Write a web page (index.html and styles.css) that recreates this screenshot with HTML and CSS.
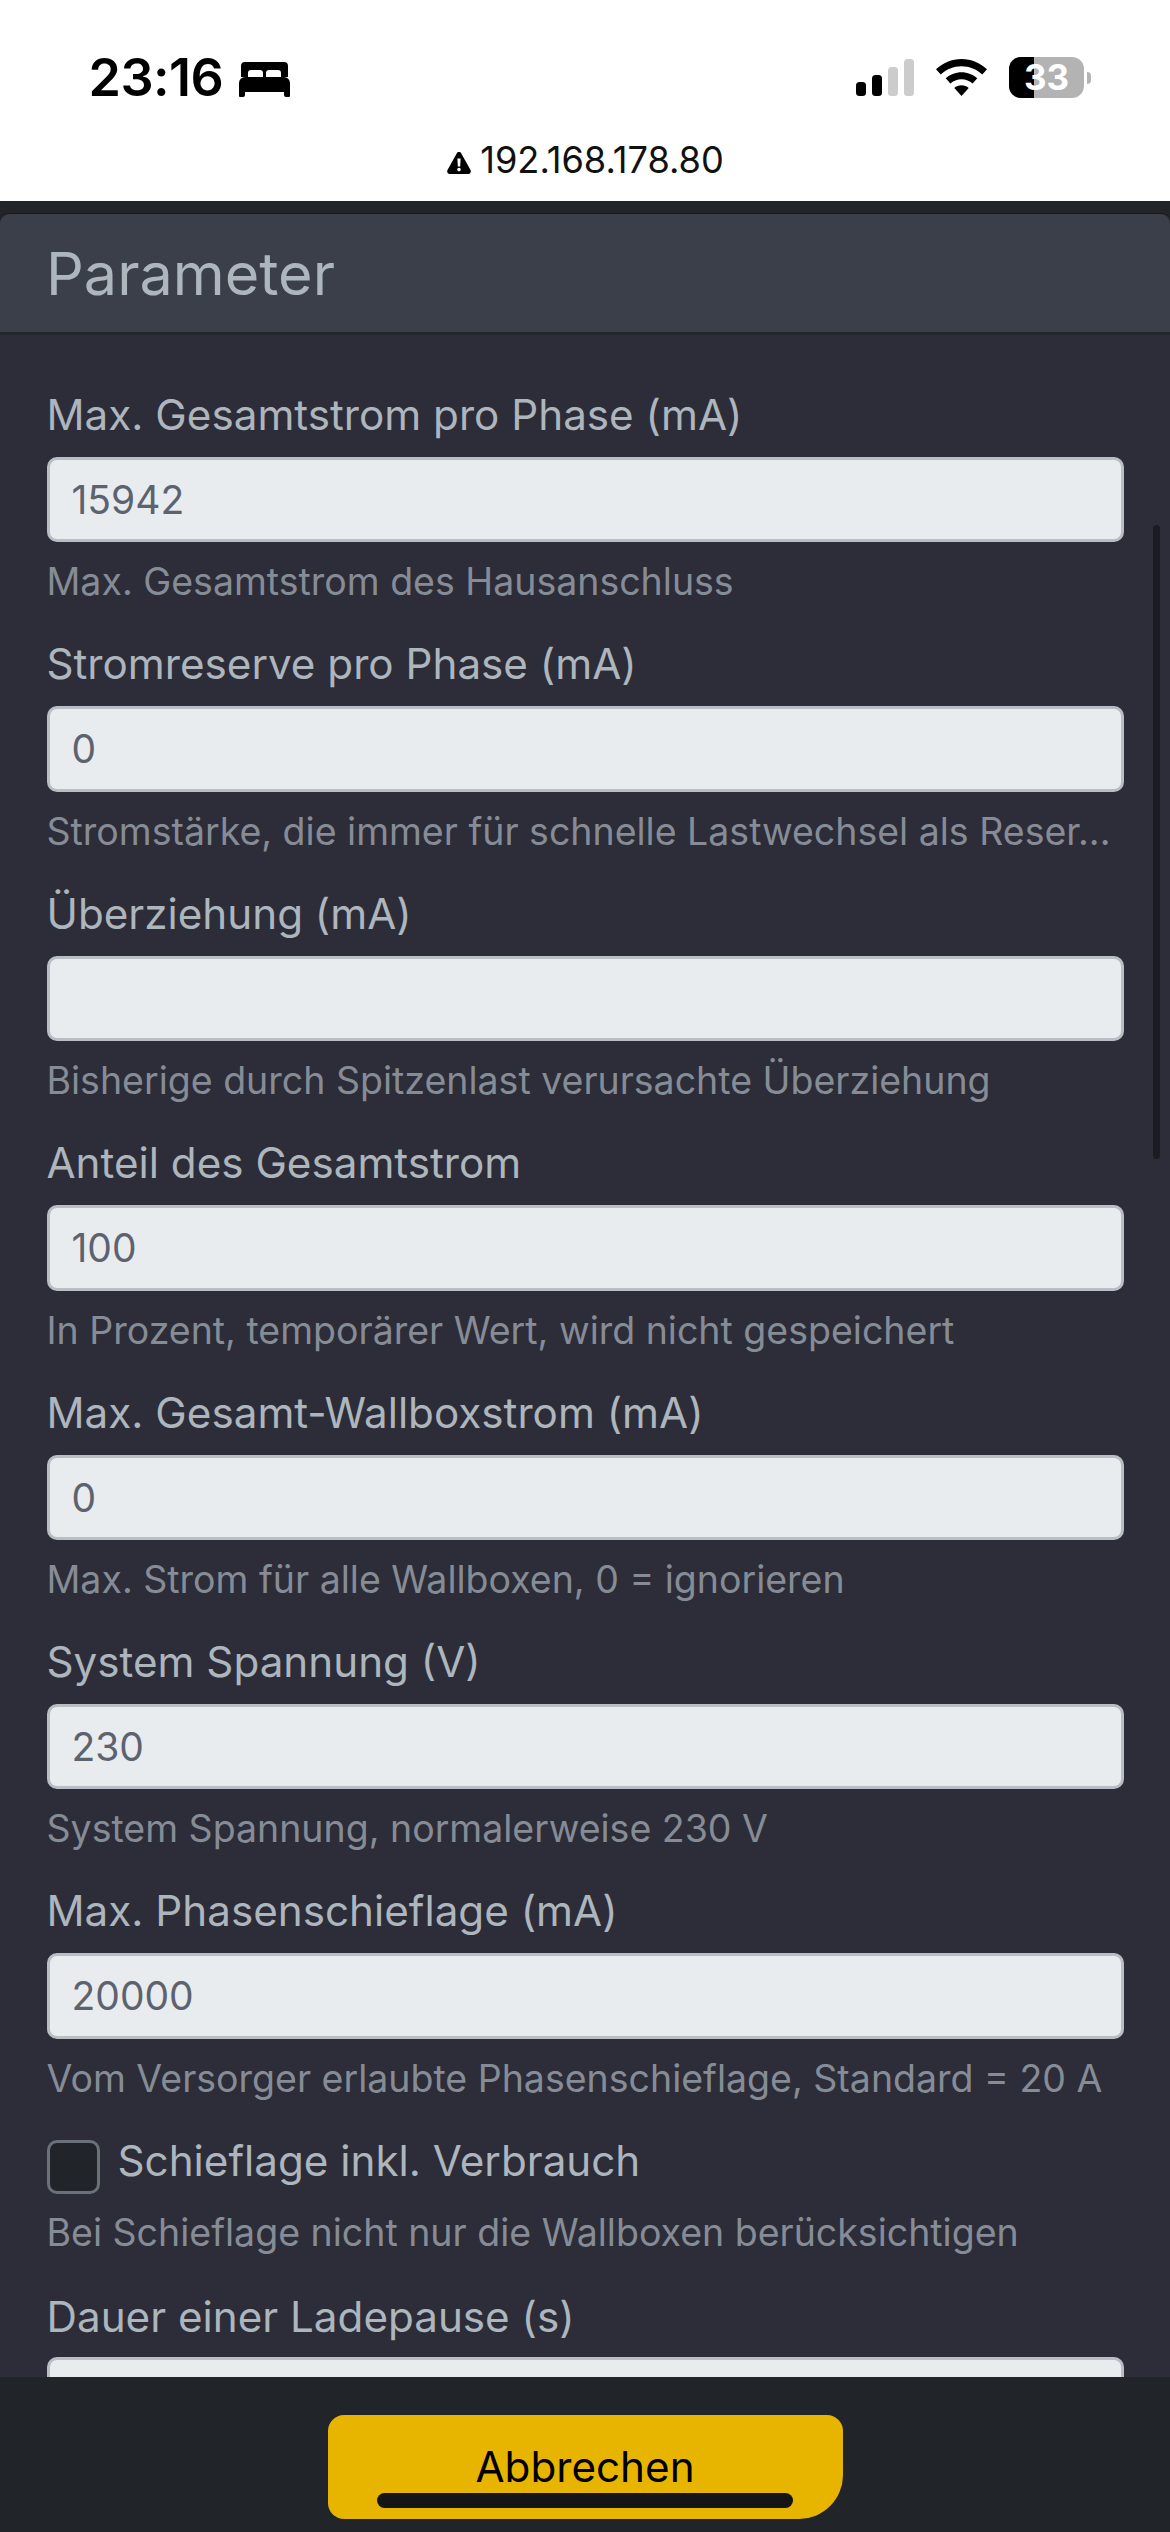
FILE: index.html
```html
<!DOCTYPE html>
<html lang="de">
<head>
<meta charset="utf-8">
<title>Parameter</title>
<link rel="stylesheet" href="styles.css">
</head>
<body>
<div class="phone">
  <header class="browser">
    <div class="status">
      <div class="status-left">
        <span class="time">23:16</span>
        <svg class="bed" viewBox="0 0 51 35"><path d="M6 0h39a4 4 0 0 1 4 4v11h-7v-4a3 3 0 0 0-3-3h-9a3 3 0 0 0-3 3v4h-3v-4a3 3 0 0 0-3-3h-9a3 3 0 0 0-3 3v4H2V4a4 4 0 0 1 4-4z"/><path d="M6 15h39a6 6 0 0 1 6 6v13a1 1 0 0 1-1 1h-3a2 2 0 0 1-2-2v-3H6v3a2 2 0 0 1-2 2H1a1 1 0 0 1-1-1V21a6 6 0 0 1 6-6z"/></svg>
      </div>
      <div class="status-right">
        <svg class="signal" viewBox="0 0 58 37"><rect x="0" y="23" width="10" height="14" rx="3.5"/><rect x="16" y="16" width="10" height="21" rx="3.5"/><rect class="off" x="32" y="8" width="10" height="29" rx="3.5"/><rect class="off" x="48" y="0" width="10" height="37" rx="3.5"/></svg>
        <svg class="wifi" viewBox="0 0 51 37"><path d="M25.5 0C35.3 0 44 3.900 51 10.200l-4.700 5.200C40.600 10.300 33.400 7.200 25.500 7.200S10.400 10.300 4.700 15.400L0 10.200C7 3.900 15.700 0 25.500 0z"/><path d="M25.500 13.200c6 0 11.600 2.300 15.800 6.100l-4.700 5.200c-2.900-2.600-6.800-4.200-11.100-4.200s-8.200 1.600-11.100 4.200l-4.700-5.200c4.200-3.800 9.800-6.100 15.800-6.100z"/><path d="M25.500 26.300c2.800 0 5.300 1 7.200 2.700L25.500 37l-7.200-8c1.900-1.700 4.400-2.700 7.200-2.700z"/></svg>
        <div class="battery">
          <div class="battery-body"><span class="battery-fill"></span><span class="battery-num">33</span></div>
          <span class="battery-nub"></span>
        </div>
      </div>
    </div>
    <div class="address">
      <svg class="warn" viewBox="0 0 24 22"><path fill-rule="evenodd" d="M12 0c1 0 1.800.5 2.300 1.400l9.200 16.500c1 1.800-.2 4.100-2.300 4.100H2.800C.7 22-.5 19.700.5 17.900L9.700 1.400C10.200.5 11 0 12 0zm-1.600 6.500l.4 8h2.400l.4-8h-3.200zM12 15.800a1.800 1.800 0 1 0 0 3.600 1.800 1.800 0 0 0 0-3.600z"/></svg>
      <span class="url">192.168.178.80</span>
    </div>
  </header>

  <main class="page">
    <section class="card">
      <h1 class="card-title">Parameter</h1>
      <div class="card-body">
        <div class="field">
          <label class="label">Max. Gesamtstrom pro Phase (mA)</label>
          <div class="input">15942</div>
          <p class="hint">Max. Gesamtstrom des Hausanschluss</p>
        </div>
        <div class="field">
          <label class="label">Stromreserve pro Phase (mA)</label>
          <div class="input">0</div>
          <p class="hint">Stromstärke, die immer für schnelle Lastwechsel als Reser...</p>
        </div>
        <div class="field">
          <label class="label">Überziehung (mA)</label>
          <div class="input"></div>
          <p class="hint">Bisherige durch Spitzenlast verursachte Überziehung</p>
        </div>
        <div class="field">
          <label class="label">Anteil des Gesamtstrom</label>
          <div class="input">100</div>
          <p class="hint">In Prozent, temporärer Wert, wird nicht gespeichert</p>
        </div>
        <div class="field">
          <label class="label">Max. Gesamt-Wallboxstrom (mA)</label>
          <div class="input">0</div>
          <p class="hint">Max. Strom für alle Wallboxen, 0 = ignorieren</p>
        </div>
        <div class="field">
          <label class="label">System Spannung (V)</label>
          <div class="input">230</div>
          <p class="hint">System Spannung, normalerweise 230 V</p>
        </div>
        <div class="field">
          <label class="label">Max. Phasenschieflage (mA)</label>
          <div class="input">20000</div>
          <p class="hint">Vom Versorger erlaubte Phasenschieflage, Standard = 20 A</p>
        </div>
        <div class="check-field">
          <div class="check-row">
            <span class="checkbox"></span>
            <label class="check-label">Schieflage inkl. Verbrauch</label>
          </div>
          <p class="hint">Bei Schieflage nicht nur die Wallboxen berücksichtigen</p>
        </div>
        <div class="field field-last">
          <label class="label">Dauer einer Ladepause (s)</label>
          <div class="input"></div>
        </div>
      </div>
    </section>
    <div class="scrollbar"></div>
  </main>

  <footer class="footer">
    <button class="cancel">Abbrechen</button>
    <span class="home"></span>
  </footer>
</div>
</body>
</html>
```
FILE: styles.css
```css
* { box-sizing: border-box; }
html, body { margin: 0; padding: 0; }
body { width: 1170px; height: 2532px; overflow: hidden; background: #212529; font-family: Inter, "Liberation Sans", sans-serif; }
.phone { width: 1170px; height: 2532px; display: flex; flex-direction: column; overflow: hidden; }

.browser { height: 201px; flex: none; background: #fff; color: #000; }
.status { height: 130px; padding: 57px 79px 0 88.500px; display: flex; justify-content: space-between; align-items: flex-start; }
.status-left { display: flex; align-items: center; gap: 15.500px; }
.time { font-size: 52px; line-height: 42px; font-weight: 600; letter-spacing: -0.5px; }
.bed { width: 51px; height: 35px; display: block; margin-top: 2px; }
.status-right { display: flex; align-items: flex-start; }
.signal { width: 58px; height: 37px; margin-top: 2px; display: block; }
.signal .off { fill: #ccc; }
.wifi { width: 51px; height: 37px; margin: 2px 0 0 22px; display: block; }
.battery { margin-left: 22px; display: flex; align-items: center; }
.battery-body { position: relative; width: 75px; height: 41px; border-radius: 12px; background: #b3b3b3; overflow: hidden; display: flex; align-items: center; justify-content: center; }
.battery-fill { position: absolute; left: 0; top: 0; bottom: 0; width: 25px; background: #000; }
.battery-num { position: relative; color: #fff; font-size: 35px; font-weight: 700; line-height: 41px; }
.battery-nub { width: 4px; height: 12px; background: #b3b3b3; border-radius: 0 6px 6px 0; margin-left: 3px; }

.address { display: flex; justify-content: center; align-items: center; gap: 9px; padding: 8px 0 0 1px; height: 52px; }
.warn { width: 24px; height: 22px; display: block; margin-top: 5px; }
.url { font-size: 36.2px; line-height: 44px; color: #111; }

.page { position: relative; flex: 1; min-height: 0; overflow: hidden; padding-top: 12px; background: #212529; }
.card { background: #2c2d38; border-top: 1px solid #181a1e; border-radius: 8px 8px 0 0; height: 100%; }
.card-title { margin: 0; height: 121px; padding: 0 46px; display: flex; align-items: center; background: #3b3f4a; border-bottom: 3px solid #24262d; border-radius: 10px 10px 0 0; font-size: 59.300px; font-weight: 400; color: #adb5bd; }
.card-body { padding: 50px 46.500px 0; }
.field { margin-bottom: 24px; }
.label { display: block; height: 60px; line-height: 60px; margin-bottom: 12px; font-size: 42.200px; color: #adb5bd; white-space: nowrap; }
.input { height: 85.4px; padding: 0 22px; background: #e9ecef; border: 3px solid #b9bdc4; border-radius: 10px; font-size: 39px; line-height: 80px; color: #5c636e; }
.hint { margin: 12px 0 0; height: 56px; line-height: 56px; font-size: 37.500px; color: #868c96; white-space: nowrap; }
.check-field { margin-bottom: 25.500px; }
.check-row { display: flex; gap: 18px; height: 74.500px; }
.checkbox { width: 53px; height: 54px; flex: none; margin-top: 9px; background: #212529; border: 3px solid #6b7178; border-radius: 10px; }
.check-label { font-size: 42.200px; line-height: 60px; color: #adb5bd; }
.check-field .hint { margin-top: 0; }
.field-last .label { margin-bottom: 10px; }

.scrollbar { position: absolute; left: 1153px; top: 324px; width: 7px; height: 634px; border-radius: 4px; background: #1b1c22; }

.footer { position: relative; flex: none; height: 155px; background: #212529; display: flex; justify-content: center; padding-top: 38px; }
.cancel { width: 515px; height: 104px; padding: 0; border: 0; background: #e7b500; border-radius: 16px 16px 44px 16px; font: 400 42.200px/50px Inter, "Liberation Sans", sans-serif; color: #000; }
.home { position: absolute; left: 377px; top: 116px; width: 416px; height: 15px; border-radius: 8px; background: #151515; }
```
